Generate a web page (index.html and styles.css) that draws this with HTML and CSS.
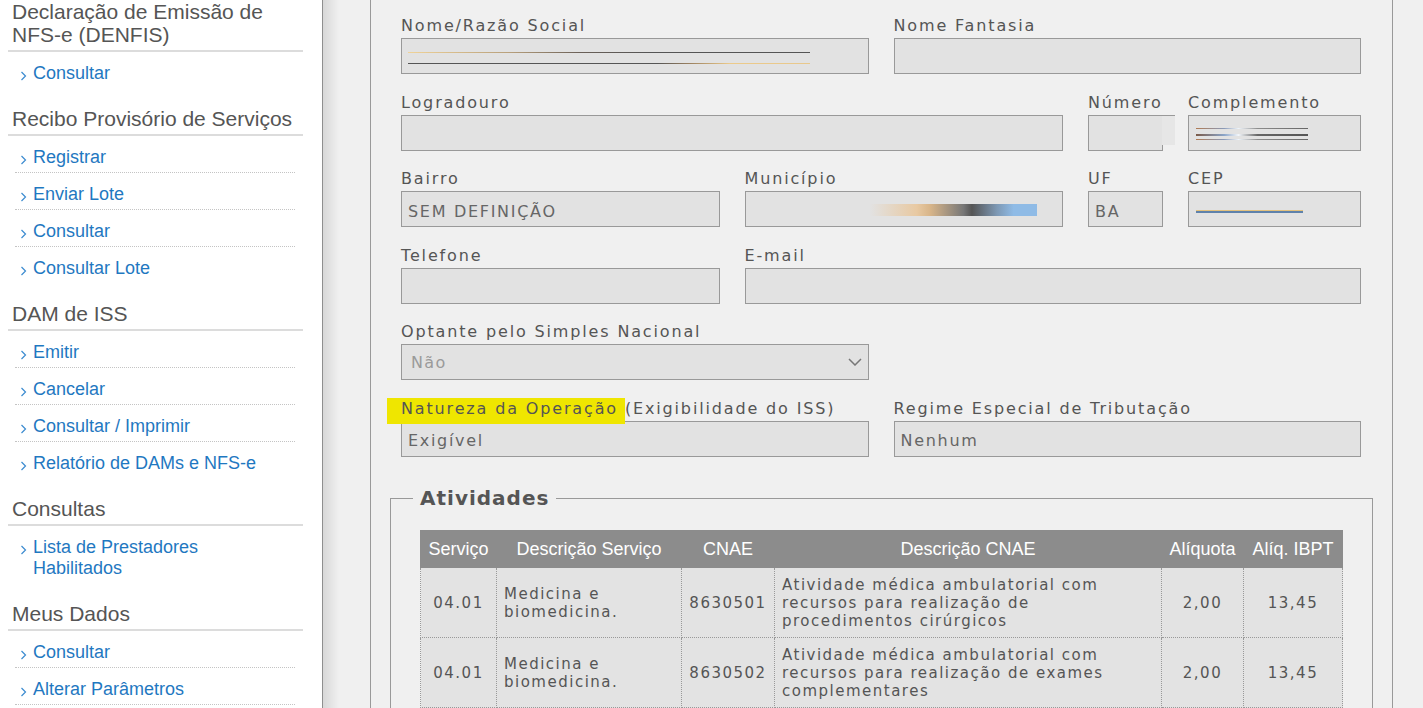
FILE: index.html
```html
<!DOCTYPE html>
<html lang="pt-BR">

<head>
    <meta charset="UTF-8">
    <meta name="viewport" content="width=device-width, initial-scale=1.0">
    <title>Meus Dados - Prestador</title>
    <link rel="stylesheet" href="styles.css">
</head>

<body>
    <div class="layout">
        <aside class="sidebar">
            <div class="menu-section">
                <h3>Declaração de Emissão de NFS-e (DENFIS)</h3>
                <ul>
                    <li><a href="#"><svg class="chevron" viewBox="0 0 8 10"><polyline points="1.5,1 5.5,5 1.5,9" /></svg><span>Consultar</span></a></li>
                </ul>
            </div>
            <div class="menu-section">
                <h3>Recibo Provisório de Serviços</h3>
                <ul>
                    <li><a href="#"><svg class="chevron" viewBox="0 0 8 10"><polyline points="1.5,1 5.5,5 1.5,9" /></svg><span>Registrar</span></a></li>
                    <li><a href="#"><svg class="chevron" viewBox="0 0 8 10"><polyline points="1.5,1 5.5,5 1.5,9" /></svg><span>Enviar Lote</span></a></li>
                    <li><a href="#"><svg class="chevron" viewBox="0 0 8 10"><polyline points="1.5,1 5.5,5 1.5,9" /></svg><span>Consultar</span></a></li>
                    <li><a href="#"><svg class="chevron" viewBox="0 0 8 10"><polyline points="1.5,1 5.5,5 1.5,9" /></svg><span>Consultar Lote</span></a></li>
                </ul>
            </div>
            <div class="menu-section">
                <h3>DAM de ISS</h3>
                <ul>
                    <li><a href="#"><svg class="chevron" viewBox="0 0 8 10"><polyline points="1.5,1 5.5,5 1.5,9" /></svg><span>Emitir</span></a></li>
                    <li><a href="#"><svg class="chevron" viewBox="0 0 8 10"><polyline points="1.5,1 5.5,5 1.5,9" /></svg><span>Cancelar</span></a></li>
                    <li><a href="#"><svg class="chevron" viewBox="0 0 8 10"><polyline points="1.5,1 5.5,5 1.5,9" /></svg><span>Consultar / Imprimir</span></a></li>
                    <li><a href="#"><svg class="chevron" viewBox="0 0 8 10"><polyline points="1.5,1 5.5,5 1.5,9" /></svg><span>Relatório de DAMs e NFS-e</span></a></li>
                </ul>
            </div>
            <div class="menu-section">
                <h3>Consultas</h3>
                <ul>
                    <li><a href="#"><svg class="chevron" viewBox="0 0 8 10"><polyline points="1.5,1 5.5,5 1.5,9" /></svg><span>Lista de Prestadores Habilitados</span></a></li>
                </ul>
            </div>
            <div class="menu-section">
                <h3>Meus Dados</h3>
                <ul class="continued">
                    <li><a href="#"><svg class="chevron" viewBox="0 0 8 10"><polyline points="1.5,1 5.5,5 1.5,9" /></svg><span>Consultar</span></a></li>
                    <li><a href="#"><svg class="chevron" viewBox="0 0 8 10"><polyline points="1.5,1 5.5,5 1.5,9" /></svg><span>Alterar Parâmetros</span></a></li>
                </ul>
            </div>
        </aside>

        <main class="content">
            <div class="panel">
                <form class="company-form" onsubmit="return false;">
                    <div class="form-row cols-2">
                        <div class="field">
                            <label for="razao">Nome/Razão Social</label>
                            <input type="text" id="razao" class="masked-name" readonly>
                        </div>
                        <div class="field">
                            <label for="fantasia">Nome Fantasia</label>
                            <input type="text" id="fantasia" readonly>
                        </div>
                    </div>

                    <div class="form-row cols-addr">
                        <div class="field span-2">
                            <label for="logradouro">Logradouro</label>
                            <input type="text" id="logradouro" readonly>
                        </div>
                        <div class="field numero">
                            <label for="numero">Número</label>
                            <input type="text" id="numero" readonly>
                        </div>
                        <div class="field">
                            <label for="complemento">Complemento</label>
                            <input type="text" id="complemento" class="masked-compl" readonly>
                        </div>
                    </div>

                    <div class="form-row cols-addr">
                        <div class="field">
                            <label for="bairro">Bairro</label>
                            <input type="text" id="bairro" value="SEM DEFINIÇÃO" readonly>
                        </div>
                        <div class="field">
                            <label for="municipio">Município</label>
                            <input type="text" id="municipio" class="masked-city" readonly>
                        </div>
                        <div class="field">
                            <label for="uf">UF</label>
                            <input type="text" id="uf" value="BA" readonly>
                        </div>
                        <div class="field">
                            <label for="cep">CEP</label>
                            <input type="text" id="cep" class="masked-cep" readonly>
                        </div>
                    </div>

                    <div class="form-row cols-addr">
                        <div class="field">
                            <label for="telefone">Telefone</label>
                            <input type="text" id="telefone" readonly>
                        </div>
                        <div class="field span-3">
                            <label for="email">E-mail</label>
                            <input type="text" id="email" readonly>
                        </div>
                    </div>

                    <div class="form-row cols-2">
                        <div class="field">
                            <label for="simples">Optante pelo Simples Nacional</label>
                            <div class="select-wrap">
                                <select id="simples" disabled>
                                    <option>Não</option>
                                    <option>Sim</option>
                                </select>
                                <svg class="select-arrow" viewBox="0 0 14 8"><polyline points="1,1 7,7 13,1" /></svg>
                            </div>
                        </div>
                    </div>

                    <div class="form-row cols-2">
                        <div class="field">
                            <label for="natureza"><mark>Natureza da Operação </mark>(Exigibilidade do ISS)</label>
                            <input type="text" id="natureza" value="Exigível" readonly>
                        </div>
                        <div class="field">
                            <label for="regime">Regime Especial de Tributação</label>
                            <input type="text" id="regime" value="Nenhum" readonly>
                        </div>
                    </div>

                    <fieldset class="activities">
                        <legend>Atividades</legend>
                        <table>
                            <colgroup>
                                <col style="width: 76px">
                                <col style="width: 185px">
                                <col style="width: 93px">
                                <col>
                                <col style="width: 82px">
                                <col style="width: 99px">
                            </colgroup>
                            <thead>
                                <tr>
                                    <th>Serviço</th>
                                    <th>Descrição Serviço</th>
                                    <th>CNAE</th>
                                    <th>Descrição CNAE</th>
                                    <th>Alíquota</th>
                                    <th>Alíq. IBPT</th>
                                </tr>
                            </thead>
                            <tbody>
                                <tr>
                                    <td class="center">04.01</td>
                                    <td>Medicina e biomedicina.</td>
                                    <td class="center">8630501</td>
                                    <td>Atividade médica ambulatorial com recursos para realização de procedimentos cirúrgicos</td>
                                    <td class="center">2,00</td>
                                    <td class="center">13,45</td>
                                </tr>
                                <tr>
                                    <td class="center">04.01</td>
                                    <td>Medicina e biomedicina.</td>
                                    <td class="center">8630502</td>
                                    <td>Atividade médica ambulatorial com recursos para realização de exames complementares</td>
                                    <td class="center">2,00</td>
                                    <td class="center">13,45</td>
                                </tr>
                            </tbody>
                        </table>
                    </fieldset>
                </form>
            </div>
        </main>
    </div>
</body>

</html>
```

FILE: styles.css
```css
html,
body {
    height: 100%;
}

body {
    margin: 0;
    overflow: hidden;
    background-color: #f0f0f0;
    font-family: "DejaVu Sans", Verdana, sans-serif;
}

.layout {
    display: flex;
    height: 100vh;
}

/* ---------- side menu ---------- */

.sidebar {
    flex: none;
    box-sizing: border-box;
    width: 323px;
    padding: 0 19px 0 8px;
    background-color: #fff;
    border-right: 1px solid #8f8f8f;
    font-family: "Liberation Sans", Arial, sans-serif;
}

.menu-section + .menu-section {
    margin-top: 19px;
}

.menu-section h3 {
    margin: 0;
    padding: 0 4px 4px;
    font-size: 21px;
    line-height: 23px;
    font-weight: normal;
    color: #555;
    border-bottom: 2px solid #dcdcdc;
}

.menu-section ul {
    list-style: none;
    margin: 0 8px 0 7px;
    padding: 0;
}

.menu-section li {
    padding: 11px 6px 4px 5px;
    line-height: 21px;
    border-bottom: 1px dotted #c4c4c4;
}

.menu-section li:last-child {
    border-bottom: none;
}

/* list runs on below the fold */
.menu-section ul.continued li:last-child {
    border-bottom: 1px dotted #c4c4c4;
}

.menu-section a {
    display: flex;
    font-size: 18px;
    color: #1f78c1;
    text-decoration: none;
}

.chevron {
    flex: none;
    width: 8px;
    height: 10px;
    margin: 8px 5px 0 0;
}

.chevron polyline {
    fill: none;
    stroke: #3b8bd0;
    stroke-width: 1.2;
}

/* ---------- content ---------- */

.content {
    flex: 1;
    overflow: hidden;
    padding-left: 47px;
    background: linear-gradient(to right, #d8d8d8, #f0f0f0 16px);
}

.panel {
    box-sizing: border-box;
    width: 1023px;
    min-height: 100%;
    padding: 16px 31px 0 30px;
    background-color: #f0f0f0;
    border-left: 1px solid #999;
    border-right: 1px solid #999;
}

.form-row {
    display: grid;
    column-gap: 25px;
    margin-bottom: 18.6px;
}

.cols-2 {
    grid-template-columns: 1fr 1fr;
}

.cols-addr {
    grid-template-columns: 1fr 1fr 75px 173px;
}

.span-2 {
    grid-column: span 2;
}

.span-3 {
    grid-column: span 3;
}

.field {
    position: relative;
    min-width: 0;
}

.field label {
    display: block;
    margin-bottom: 2px;
    font-size: 16px;
    line-height: 20px;
    letter-spacing: 1.85px;
    color: #555;
    white-space: nowrap;
}

.field label mark {
    margin-left: -14px;
    padding: 1px 0 6px 14px;
    background-color: #efe600;
    color: #555;
}

.field input,
.field select {
    display: block;
    box-sizing: border-box;
    width: 100%;
    height: 36px;
    margin: 0;
    padding: 4px 6px 0;
    font-family: "DejaVu Sans", Verdana, sans-serif;
    font-size: 16px;
    letter-spacing: 1.7px;
    color: #666;
    background-color: #e2e2e2;
    border: 1px solid #999;
    border-radius: 0;
    outline: none;
}

.select-wrap {
    position: relative;
}

.field select {
    appearance: none;
    -webkit-appearance: none;
    padding: 0 9px;
    letter-spacing: 1.4px;
    color: #9a9a9a;
    opacity: 1;
}

.select-arrow {
    position: absolute;
    right: 7px;
    top: 14px;
    width: 14px;
    height: 8px;
}

.select-arrow polyline {
    fill: none;
    stroke: #777;
    stroke-width: 1.5;
}

/* masked values (blurred out in the original record) */

.masked-name {
    background-image:
        linear-gradient(to right, #f0d398, #b8a07c 25%, #6a6058 43%, #555 60%, #555),
        linear-gradient(to right, #555, #555 62%, #9a8060 70%, #ecca8a 80%, #e8c88c);
    background-size: 402px 1px, 402px 1px;
    background-position: 6px 13px, 6px 24px;
    background-repeat: no-repeat;
}

.masked-compl {
    background-image:
        linear-gradient(to right, #b07a52, #8a9ab8 25%, #eef4fa 38%, #8c8c8c 55%, #666),
        linear-gradient(to right, #7a5a48, #8aa4c8 25%, #f2f6fa 38%, #666 55%, #555),
        linear-gradient(to right, #b07a52, #8a9ab8 25%, #eef4fa 38%, #8c8c8c 55%, #666);
    background-size: 112px 1px, 112px 2px, 112px 1px;
    background-position: 7px 12px, 7px 18px, 7px 23px;
    background-repeat: no-repeat;
}

.masked-city {
    background-image:
        linear-gradient(to right, rgba(226, 226, 226, 0), #e8c9a2 28%, #d8b589 36%, #777 56%, #555 61%, #7d98b4 76%, #8fbbe6 86%, #8fbbe6),
        linear-gradient(to right, rgba(102, 102, 102, 0) 45%, #666 62%, #666);
    background-size: 167px 12px, 167px 1px;
    background-position: 124px 12px, 124px 23px;
    background-repeat: no-repeat;
}

.masked-cep {
    background-image:
        linear-gradient(#e3c27f, #e3c27f),
        linear-gradient(#5f82ab, #5f82ab);
    background-size: 107px 1px, 107px 2px;
    background-position: 7px 18px, 7px 19px;
    background-repeat: no-repeat;
}

.numero::after {
    content: "";
    position: absolute;
    top: 22px;
    right: -12px;
    width: 13px;
    height: 29px;
    background-color: #e6e6e6;
    border-top: 1px solid #999;
}

/* ---------- activities table ---------- */

.activities {
    margin: 29.5px -12px 0 -11px;
    padding: 20px 29px 20px;
    border: 1px solid #999;
}

.activities legend {
    margin-left: -7px;
    padding: 0 7px;
    font-size: 20px;
    line-height: 24px;
    font-weight: bold;
    letter-spacing: 1px;
    color: #555;
}

.activities table {
    width: 100%;
    table-layout: fixed;
    border-collapse: collapse;
}

.activities th {
    height: 36px;
    padding: 0 4px;
    font-family: "Liberation Sans", Arial, sans-serif;
    font-size: 18px;
    font-weight: normal;
    color: #fff;
    text-align: center;
    white-space: nowrap;
    background-color: #8c8c8c;
    border: 1px solid #8c8c8c;
}

.activities td {
    padding: 8px 7px 7px;
    font-size: 15px;
    line-height: 18px;
    letter-spacing: 1.5px;
    color: #555;
    text-align: left;
    vertical-align: middle;
    background-color: #e3e3e3;
    border: 1px dotted #999;
}

.activities td.center {
    text-align: center;
}
```
